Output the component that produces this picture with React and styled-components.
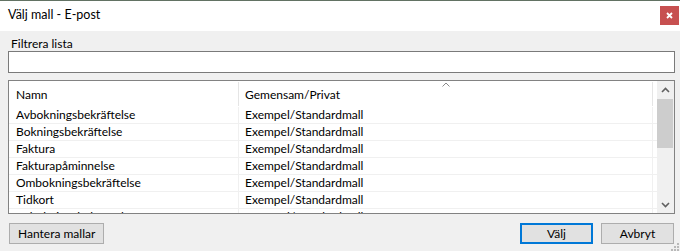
import styled, { createGlobalStyle } from 'styled-components';

const GlobalStyle = createGlobalStyle`
  html, body {
    margin: 0;
    padding: 0;
    background: #ffffff;
  }
  * {
    box-sizing: border-box;
  }
`;

const templates = [
  { name: 'Avbokningsbekräftelse', kind: 'Exempel/Standardmall' },
  { name: 'Bokningsbekräftelse', kind: 'Exempel/Standardmall' },
  { name: 'Faktura', kind: 'Exempel/Standardmall' },
  { name: 'Fakturapåminnelse', kind: 'Exempel/Standardmall' },
  { name: 'Ombokningsbekräftelse', kind: 'Exempel/Standardmall' },
  { name: 'Tidkort', kind: 'Exempel/Standardmall' },
  { name: 'Avbokningsbekräftelse SMS', kind: 'Exempel/Standardmall' },
];

const Chevron = ({ down }) => (
  <svg width="9" height="6" viewBox="0 0 9 6">
    <polyline
      points={down ? '1,1 4.5,4.5 8,1' : '1,5 4.5,1.5 8,5'}
      fill="none"
      stroke="#606060"
      strokeWidth="1.6"
    />
  </svg>
);

const App = () => {
  return (
    <Window>
      <GlobalStyle />
      <TitleBar>
        <Title>Välj mall - E-post</Title>
        <CloseButton>
          <svg width="7" height="7" viewBox="0 0 7 7">
            <path d="M1 1 L6 6 M6 1 L1 6" stroke="#fff" strokeWidth="1.8" />
          </svg>
        </CloseButton>
      </TitleBar>
      <Body>
        <Label>Filtrera lista</Label>
        <FilterInput />
        <ListBox>
          <ListGrid>
            <HeaderRow>
              <HeaderCell divider>Namn</HeaderCell>
              <HeaderCell divider>
                Gemensam/Privat
                <SortArrow>
                  <svg width="9" height="5" viewBox="0 0 9 5">
                    <polyline points="1,4.5 4.5,1 8,4.5" fill="none" stroke="#8a8a8a" strokeWidth="1" />
                  </svg>
                </SortArrow>
              </HeaderCell>
              <HeaderCell />
            </HeaderRow>
            {templates.map((t, i) => (
              <Row key={i}>
                <Cell>{t.name}</Cell>
                <Cell>{t.kind}</Cell>
                <Cell last />
              </Row>
            ))}
          </ListGrid>
          <ScrollBar>
            <ScrollButton>
              <Chevron />
            </ScrollButton>
            <Thumb />
            <Track />
            <ScrollButton>
              <Chevron down />
            </ScrollButton>
          </ScrollBar>
        </ListBox>
        <Footer>
          <Button>Hantera mallar</Button>
          <Spacer />
          <Button primary>Välj</Button>
          <Button>Avbryt</Button>
        </Footer>
        <Grip>
          <svg width="10" height="10" viewBox="0 0 10 10">
            {[
              [7, 1],
              [4, 4],
              [7, 4],
              [1, 7],
              [4, 7],
              [7, 7],
            ].map(([x, y], i) => (
              <rect key={i} x={x} y={y} width="2" height="2" fill="#b9b9b9" />
            ))}
          </svg>
        </Grip>
      </Body>
    </Window>
  );
};

const Window = styled.div`
  position: relative;
  width: 680px;
  height: 251px;
  display: flex;
  flex-direction: column;
  font-family: Lato, 'Noto Sans', sans-serif;
  font-size: 12px;
  color: #000;
  background: #f0f0f0;
  overflow: hidden;
`;

const TitleBar = styled.div`
  height: 31px;
  flex: none;
  display: flex;
  align-items: center;
  justify-content: space-between;
  border-top: 1px solid #627263;
  background: #ffffff;
  padding: 0 1px 2px 8px;
`;

const Title = styled.div`
  font-size: 12.5px;
  line-height: 16px;
`;

const CloseButton = styled.div`
  width: 19px;
  height: 19px;
  background: #c75050;
  display: flex;
  align-items: center;
  justify-content: center;
`;

const Body = styled.div`
  flex: 1;
  display: flex;
  flex-direction: column;
  padding: 6px 5px 0 8px;
`;

const Label = styled.div`
  line-height: 14px;
  padding-left: 3px;
`;

const FilterInput = styled.div`
  height: 22px;
  border: 1px solid #7a7a7a;
  background: #ffffff;
`;

const ListBox = styled.div`
  margin-top: 7px;
  height: 134px;
  border: 1px solid #828282;
  background: #ffffff;
  display: flex;
`;

const ListGrid = styled.div`
  flex: 1;
  overflow: hidden;
`;

const HeaderRow = styled.div`
  height: 26px;
  display: grid;
  grid-template-columns: 230px 414px 1fr;
  padding-top: 1px;
`;

const HeaderCell = styled.div`
  position: relative;
  display: flex;
  align-items: center;
  padding-left: 6px;
  height: 24px;
  border-right: ${({ divider }) => (divider ? '1px solid #e5e5e5' : 'none')};
  &:first-child {
    padding-left: 7px;
  }
`;

const SortArrow = styled.span`
  position: absolute;
  top: 0;
  left: 50%;
  transform: translateX(-50%);
  line-height: 0;
`;

const Row = styled.div`
  height: 17px;
  display: grid;
  grid-template-columns: 230px 414px 1fr;
  border-bottom: 1px solid #f0f0f0;
`;

const Cell = styled.div`
  display: flex;
  align-items: center;
  padding-left: 6px;
  line-height: 16px;
  white-space: nowrap;
  overflow: hidden;
  border-right: ${({ last }) => (last ? 'none' : '1px solid #f0f0f0')};
  &:first-child {
    padding-left: 7px;
  }
`;

const ScrollBar = styled.div`
  width: 17px;
  flex: none;
  background: #f0f0f0;
  display: flex;
  flex-direction: column;
`;

const ScrollButton = styled.div`
  height: 17px;
  flex: none;
  display: flex;
  align-items: center;
  justify-content: center;
`;

const Thumb = styled.div`
  height: 49px;
  margin: 1px 1px 0 0;
  background: #cdcdcd;
`;

const Track = styled.div`
  flex: 1;
`;

const Footer = styled.div`
  margin-top: 9px;
  display: flex;
  gap: 8px;
  padding: 0 1px;
`;

const Spacer = styled.div`
  flex: 1;
`;

const Button = styled.div`
  height: 21px;
  width: ${({ primary }) => (primary ? '73px' : 'auto')};
  min-width: 73px;
  padding: 0 8px;
  display: flex;
  align-items: center;
  justify-content: center;
  background: #e1e1e1;
  border: ${({ primary }) => (primary ? '2px solid #0078d7' : '1px solid #adadad')};
`;

const Grip = styled.div`
  position: absolute;
  right: 0;
  bottom: -1px;
  line-height: 0;
`;

export default App;
